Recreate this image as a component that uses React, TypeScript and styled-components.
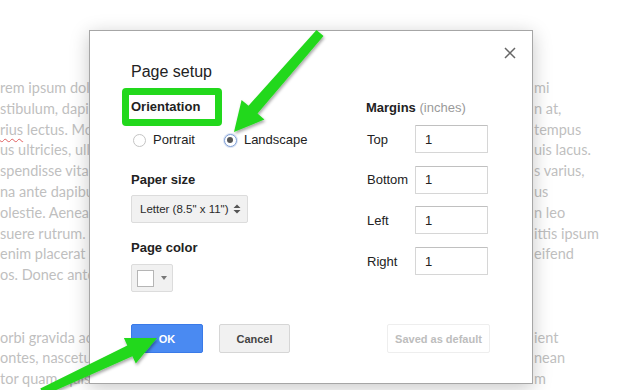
import styled, { createGlobalStyle, css } from 'styled-components';

const GlobalStyle = createGlobalStyle`
    html, body {
        margin: 0;
        padding: 0;
        background: #ffffff;
        overflow: hidden;
    }
`

const Page = styled.div`
    position: relative;
    width: 640px;
    height: 390px;
    overflow: hidden;
    background: #ffffff;
`

const Doc = styled.div`
    display: flex;
    justify-content: space-between;
    padding-top: 78px;
`

const DocColumn = styled.div<{ $width: number }>`
    display: flex;
    flex-direction: column;
    width: ${p => p.$width}px;
    font-family: Lato, "Open Sans", sans-serif;
    font-size: 14.5px;
    line-height: 20.8px;
    color: #bfbfbf;
    white-space: nowrap;
`

const DocLine = styled.div`
    height: 20.8px;
`

const Misspelled = styled.span`
    text-decoration: underline wavy #e06060;
    text-decoration-thickness: 1px;
    text-underline-offset: 3px;
`

const Dialog = styled.div`
    position: absolute;
    left: 89px;
    top: 30px;
    width: 444px;
    height: 354px;
    box-sizing: border-box;
    display: flex;
    flex-direction: column;
    padding: 31px 42px 30px 41px;
    background: #ffffff;
    border: 1px solid #a6a6a6;
    box-shadow: 0 4px 18px rgba(0, 0, 0, 0.22);
    font-family: "Liberation Sans", Arial, sans-serif;
    color: #222222;
`

const CloseButton = styled.button`
    position: absolute;
    top: 12px;
    right: 12px;
    width: 20px;
    height: 20px;
    padding: 0;
    border: none;
    background: transparent;
    display: flex;
    align-items: center;
    justify-content: center;
`

const Title = styled.div`
    font-size: 16px;
    line-height: 20px;
`

const Body = styled.div`
    display: flex;
    margin-top: 17px;
`

const Column = styled.div<{ $width?: number }>`
    display: flex;
    flex-direction: column;
    align-items: flex-start;
    ${p => p.$width && css`width: ${p.$width}px;`}
`

const SectionLabel = styled.div<{ $gap?: number }>`
    font-size: 13px;
    font-weight: bold;
    line-height: 16px;
    margin-top: ${p => p.$gap ?? 0}px;
`

const Hint = styled.span`
    font-weight: normal;
    color: #9a9a9a;
`

const Highlight = styled.span`
    position: relative;
    display: inline-block;

    &::before {
        content: '';
        position: absolute;
        left: -9px;
        right: -22px;
        top: -11px;
        bottom: -11px;
        border: 7px solid #22d81c;
        border-radius: 4px;
    }
`

const RadioRow = styled.div`
    display: flex;
    align-items: center;
    gap: 29px;
    margin: 17px 0 0 2px;
    height: 16px;
`

const RadioOption = styled.label`
    display: flex;
    align-items: center;
    gap: 7px;
    font-size: 13px;
    line-height: 16px;
`

const RadioCircle = styled.span<{ $checked?: boolean }>`
    position: relative;
    width: 13px;
    height: 13px;
    box-sizing: border-box;
    border-radius: 50%;
    border: 1px solid #c4c4c4;
    background: #ffffff;

    ${p => p.$checked && css`
        border-color: #7f9fd6;
        box-shadow: 0 0 0 1px rgba(120, 150, 210, 0.25);

        &::after {
            content: '';
            position: absolute;
            left: 2.5px;
            top: 2.5px;
            width: 6px;
            height: 6px;
            border-radius: 50%;
            background: #555555;
        }
    `}
`

const Select = styled.div`
    display: flex;
    align-items: center;
    justify-content: space-between;
    margin-top: 7px;
    width: 117px;
    height: 28px;
    box-sizing: border-box;
    padding: 0 6px 0 8px;
    background: #f1f1f1;
    border: 1px solid #dcdcdc;
    border-radius: 2px;
    font-size: 11.5px;
    color: #2a2a2a;
`

const ColorButton = styled.div`
    display: flex;
    align-items: center;
    gap: 7px;
    margin-top: 8px;
    width: 42px;
    height: 28px;
    box-sizing: border-box;
    padding-left: 5px;
    background: #f1f1f1;
    border: 1px solid #dcdcdc;
    border-radius: 2px;
`

const Swatch = styled.span`
    width: 17px;
    height: 17px;
    box-sizing: border-box;
    border: 1px solid #b5b5b5;
    background: #ffffff;
`

const Caret = styled.span`
    width: 0;
    height: 0;
    border-left: 3.5px solid transparent;
    border-right: 3.5px solid transparent;
    border-top: 4px solid #777777;
`

const MarginList = styled.div`
    display: flex;
    flex-direction: column;
    gap: 12.7px;
    margin-top: 9px;
`

const MarginRow = styled.label`
    display: flex;
    align-items: center;
    font-size: 13px;
`

const MarginName = styled.span`
    width: 49px;
    padding-left: 1px;
    box-sizing: border-box;
`

const MarginInput = styled.input`
    width: 73px;
    height: 28px;
    box-sizing: border-box;
    padding: 0 0 0 9px;
    border: 1px solid #d6d6d6;
    border-top-color: #c0c0c0;
    border-radius: 1px;
    font-family: "Liberation Sans", Arial, sans-serif;
    font-size: 13px;
    color: #222222;
    outline: none;
`

const Footer = styled.div`
    display: flex;
    align-items: center;
    gap: 16px;
    margin-top: auto;
`

const Button = styled.button<{ $variant: 'primary' | 'default' | 'disabled'; $width: number }>`
    width: ${p => p.$width}px;
    height: 29px;
    padding: 0;
    border-radius: 2px;
    font-family: "Liberation Sans", Arial, sans-serif;
    font-size: 11px;
    font-weight: bold;

    ${p => p.$variant === 'primary' && css`
        background: #4a8af2;
        border: 1px solid #3a7ae8;
        color: #ffffff;
    `}
    ${p => p.$variant === 'default' && css`
        background: #f1f1f1;
        border: 1px solid #d6d6d6;
        color: #444444;
    `}
    ${p => p.$variant === 'disabled' && css`
        margin-left: auto;
        background: #ffffff;
        border: 1px solid #eeeeee;
        color: #bdbdbd;
    `}
`

const Annotations = styled.svg`
    position: absolute;
    left: 0;
    top: 0;
    pointer-events: none;
`

const leftLines = [
    'rem ipsum dolor', 'stibulum, dapibus', 'rius', 'us ultricies, ulla', 'spendisse vitae',
    'na ante dapibus', 'olestie. Aenean', 'suere rutrum. In', 'enim placerat', 'os. Donec ante',
    '', '', 'orbi gravida ac', 'ontes, nascetur', 'tor quam, quis',
]

const rightLines = [
    'mi', 'n at,', 'tempus', 'uis lacus.', 's varius,', 'us', 'n leo', 'ittis ipsum', 'eifend',
    '', '', '', 'ient', 'nean', 'm',
]

const margins = ['Top', 'Bottom', 'Left', 'Right']

const App = () => {
    return (
        <Page>
            <GlobalStyle />
            <Doc>
                <DocColumn $width={130}>
                    {leftLines.map((line, i) => (
                        <DocLine key={i}>
                            {i === 2 ? <><Misspelled>rius</Misspelled> lectus. Mor</> : line}
                        </DocLine>
                    ))}
                </DocColumn>
                <DocColumn $width={106}>
                    {rightLines.map((line, i) => <DocLine key={i}>{line}</DocLine>)}
                </DocColumn>
            </Doc>

            <Dialog>
                <CloseButton aria-label="Close">
                    <svg width="12" height="12" viewBox="0 0 12 12">
                        <path d="M1 1 L11 11 M11 1 L1 11" stroke="#666" strokeWidth="1.5" />
                    </svg>
                </CloseButton>
                <Title>Page setup</Title>
                <Body>
                    <Column $width={235}>
                        <SectionLabel><Highlight>Orientation</Highlight></SectionLabel>
                        <RadioRow>
                            <RadioOption><RadioCircle />Portrait</RadioOption>
                            <RadioOption><RadioCircle $checked />Landscape</RadioOption>
                        </RadioRow>
                        <SectionLabel $gap={24}>Paper size</SectionLabel>
                        <Select>
                            <span>Letter (8.5" x 11")</span>
                            <svg width="8" height="12" viewBox="0 0 8 12">
                                <path d="M0.5 5 L4 1.5 L7.5 5 Z M0.5 7 L4 10.5 L7.5 7 Z" fill="#555" />
                            </svg>
                        </Select>
                        <SectionLabel $gap={17}>Page color</SectionLabel>
                        <ColorButton>
                            <Swatch />
                            <Caret />
                        </ColorButton>
                    </Column>
                    <Column>
                        <SectionLabel $gap={1}>Margins <Hint>(inches)</Hint></SectionLabel>
                        <MarginList>
                            {margins.map(name => (
                                <MarginRow key={name}>
                                    <MarginName>{name}</MarginName>
                                    <MarginInput defaultValue="1" />
                                </MarginRow>
                            ))}
                        </MarginList>
                    </Column>
                </Body>
                <Footer>
                    <Button $variant="primary" $width={72}>OK</Button>
                    <Button $variant="default" $width={71}>Cancel</Button>
                    <Button $variant="disabled" $width={103}>Saved as default</Button>
                </Footer>
            </Dialog>

            <Annotations width="640" height="390" viewBox="0 0 640 390">
                <defs>
                    <filter id="arrowShadow" x="-20%" y="-20%" width="140%" height="140%">
                        <feDropShadow dx="1" dy="2" stdDeviation="1.5" floodColor="#000" floodOpacity="0.35" />
                    </filter>
                </defs>
                <g fill="#22d81c" filter="url(#arrowShadow)">
                    <polygon points="316.5,30 323.5,36 257.5,113.6 264.4,119.5 234,132 241.6,99.9 248.5,105.8" />
                    <polygon points="40.3,388.4 43.7,395.6 132.4,356.2 135.8,363.5 157,338 123.9,338.1 127.3,345.4" />
                </g>
            </Annotations>
        </Page>
    )
}

export default App
